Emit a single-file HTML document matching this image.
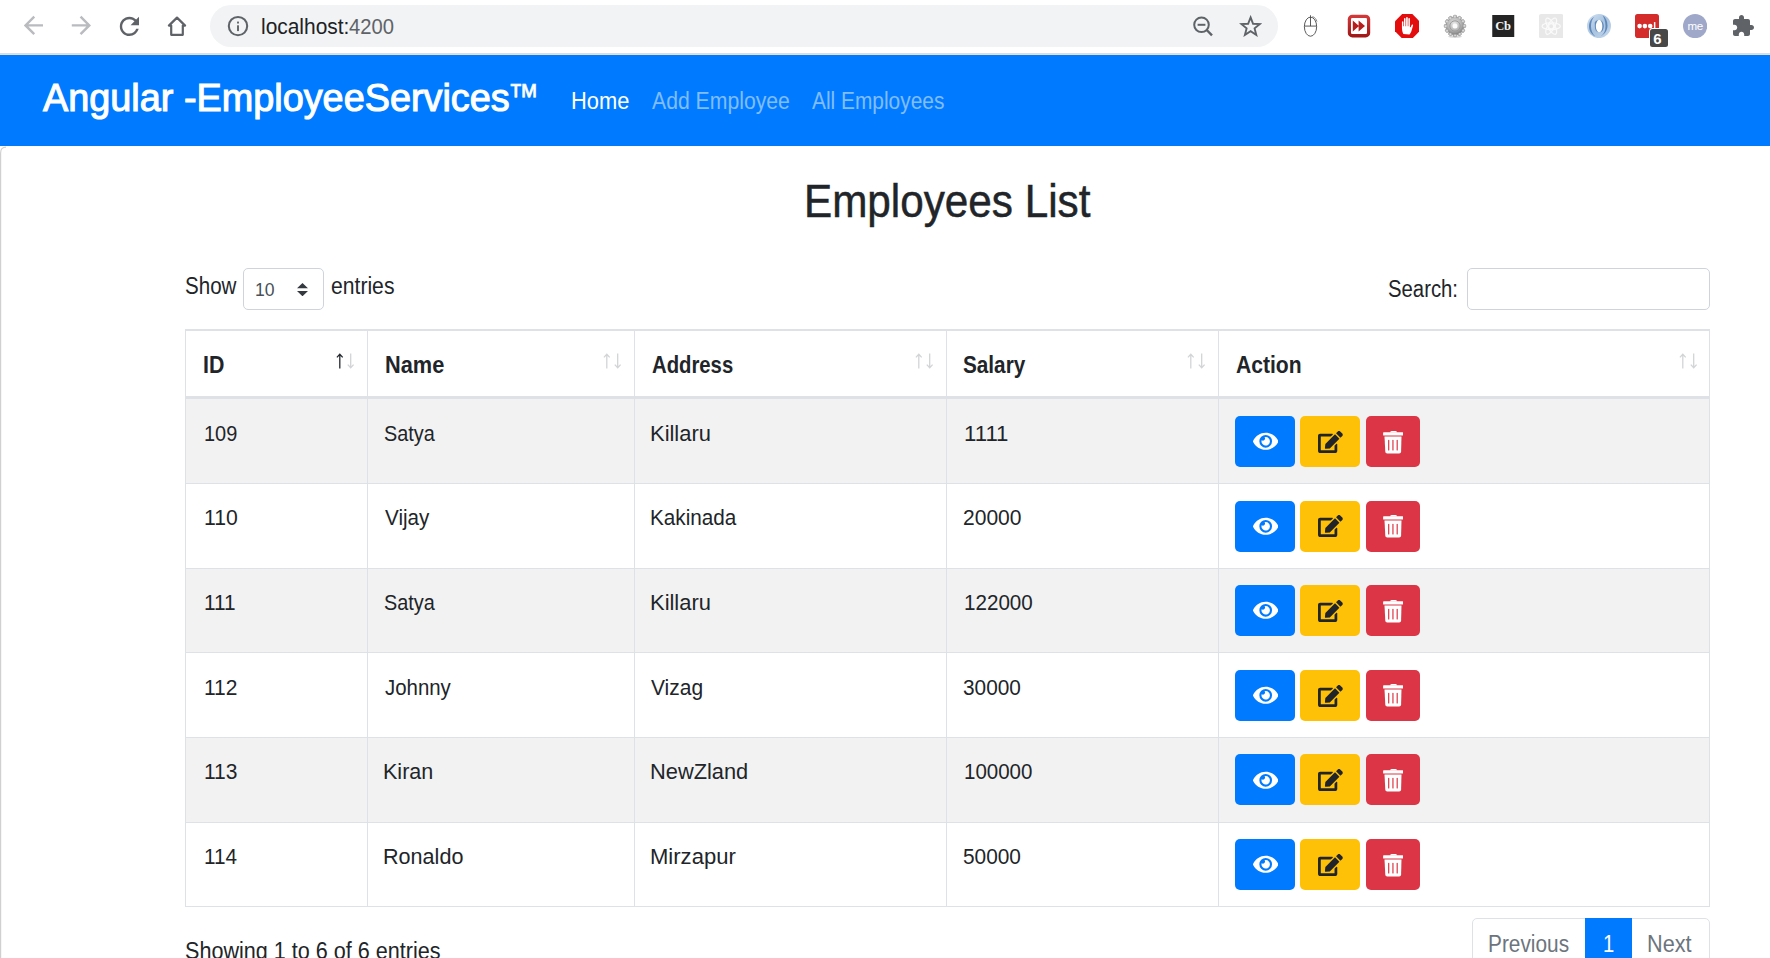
<!DOCTYPE html>
<html><head><meta charset="utf-8"><title>Employees</title><style>
html,body{margin:0;padding:0;width:1770px;height:958px;overflow:hidden;background:#fff}
body{position:relative;font-family:"Liberation Sans",sans-serif}
.r{position:absolute;display:block}
.t{position:absolute;white-space:nowrap;line-height:1;transform-origin:0 0}
</style></head><body>
<div class="r" style="left:0px;top:0px;width:1770px;height:53px;background:#ffffff;"></div>
<div class="r" style="left:0px;top:53px;width:1770px;height:1px;background:#dadce0;"></div>
<div class="r" style="left:0px;top:54px;width:1770px;height:1px;background:#e4e0dc;"></div>
<div class="r" style="left:210px;top:5px;width:1068px;height:42px;background:#f1f3f4;border-radius:21px;"></div>
<svg class="r" style="left:18.6px;top:11px;width:28.8px;height:28.8px" viewBox="0 0 24 24"><path fill="#b9bbbe" d="M20 11H7.83l5.59-5.59L12 4l-8 8 8 8 1.41-1.41L7.83 13H20v-2z"/></svg>
<svg class="r" style="left:66.6px;top:11px;width:28.8px;height:28.8px" viewBox="0 0 24 24"><path fill="#b9bbbe" d="M12 4l-1.41 1.41L16.17 11H4v2h12.17l-5.58 5.59L12 20l8-8z"/></svg>
<svg class="r" style="left:115.3px;top:11.6px;width:28.8px;height:28.8px" viewBox="0 0 24 24"><path fill="#5f6368" d="M17.65 6.35C16.2 4.9 14.21 4 12 4c-4.42 0-7.99 3.58-7.99 8s3.57 8 7.99 8c3.730 0 6.84-2.55 7.73-6h-2.080c-.82 2.33-3.04 4-5.65 4-3.31 0-6-2.69-6-6s2.69-6 6-6c1.66 0 3.14.69 4.22 1.78L13 11h7V4l-2.35 2.35z"/></svg>
<svg class="r" style="left:165px;top:14px;width:24px;height:24px" viewBox="0 0 24 24"><path fill="none" stroke="#5f6368" stroke-width="2.2" stroke-linejoin="round" d="M12 3.6L3.9 11.6H6.2V20.8h11.6v-9.2h2.3z"/></svg>
<svg class="r" style="left:225.5px;top:14.4px;width:24px;height:24px" viewBox="0 0 24 24"><circle cx="12" cy="12.1" r="9.2" fill="none" stroke="#5f6368" stroke-width="2.05"/><rect x="11.05" y="11.3" width="1.9" height="5.8" fill="#5f6368"/><rect x="11.05" y="7.6" width="1.9" height="1.9" fill="#5f6368"/></svg>
<svg class="r" style="left:1190px;top:12.5px;width:24px;height:26px" viewBox="0 0 24 26"><circle cx="11.5" cy="11.8" r="7.3" fill="none" stroke="#5f6368" stroke-width="2"/><rect x="7.6" y="10.8" width="7.8" height="2" fill="#5f6368"/><path d="M16.7 17l5.3 5.3" stroke="#5f6368" stroke-width="2.4"/></svg>
<svg class="r" style="left:1239.3px;top:14.6px;width:23.2px;height:22.8px" viewBox="0 0 24 24"><path fill="none" stroke="#5f6368" stroke-width="2" stroke-linejoin="miter" d="M12 2.6l2.6 6.6 7 .4-5.4 4.5 1.8 6.9L12 17.1 6 21l1.8-6.9L2.4 9.6l7-.4z"/></svg>
<svg class="r" style="left:1300px;top:14.3px;width:22px;height:23.4px" viewBox="0 0 22 24"><ellipse cx="10.5" cy="13" rx="6.3" ry="9.8" fill="none" stroke="#444" stroke-width="0.9"/><path d="M4.3 12.4h12.4M10.5 1.3v11.1" stroke="#444" stroke-width="0.9" fill="none"/><path d="M12.5 2.6c2.5 .8 4 2.8 4.6 5.2" stroke="#666" stroke-width="0.8" fill="none"/></svg>
<svg class="r" style="left:1347px;top:14px;width:24px;height:24px" viewBox="0 0 24 24"><defs><linearGradient id="rf" x1="0" y1="0" x2="0" y2="1"><stop offset="0" stop-color="#d63a3a"/><stop offset="1" stop-color="#9e1616"/></linearGradient></defs><rect x="0.8" y="0.8" width="22.4" height="22.6" rx="4.5" fill="url(#rf)"/><rect x="4" y="4" width="16" height="16" rx="1.2" fill="#fff"/><path d="M5.8 6.6l6.2 5.4-6.2 5.4zM11.6 6.6l6.4 5.4-6.4 5.4z" fill="#b81d1d"/></svg>
<svg class="r" style="left:1394.5px;top:13.5px;width:24.5px;height:24.5px" viewBox="0 0 24 24"><path d="M7 0h10l7 7v10l-7 7H7l-7-7V7z" fill="#e40d0d"/><path d="M8.2 19.5c-1-1.8-1.4-4-1.4-6V7.6c0-.7 1.4-.7 1.4 0V12h.6V4.6c0-.8 1.5-.8 1.5 0V12h.6V3.6c0-.9 1.6-.9 1.6 0V12h.6V4.4c0-.8 1.5-.8 1.5 0V13l.7.1 1-2.3c.4-.8 1.6-.5 1.4.4l-1.6 5.5c-.5 1.6-1.3 2.8-2 3.4z" fill="#fff"/></svg>
<svg class="r" style="left:1443px;top:13.5px;width:24px;height:24px" viewBox="0 0 24 24"><defs><radialGradient id="gg" cx="45%" cy="35%" r="70%"><stop offset="0" stop-color="#e6e6e6"/><stop offset=".6" stop-color="#b4b4b4"/><stop offset="1" stop-color="#7a7a7a"/></radialGradient></defs><ellipse cx="12" cy="22.6" rx="7" ry="1.2" fill="#d8d8d8"/><g fill="url(#gg)" stroke="#8a8a8a" stroke-width="0.5"><circle cx="12" cy="12" r="8.8"/><rect x="10.2" y="1.2" width="3.6" height="4.4" rx="1.4" transform="rotate(0 12 12)"/><rect x="10.2" y="1.2" width="3.6" height="4.4" rx="1.4" transform="rotate(30 12 12)"/><rect x="10.2" y="1.2" width="3.6" height="4.4" rx="1.4" transform="rotate(60 12 12)"/><rect x="10.2" y="1.2" width="3.6" height="4.4" rx="1.4" transform="rotate(90 12 12)"/><rect x="10.2" y="1.2" width="3.6" height="4.4" rx="1.4" transform="rotate(120 12 12)"/><rect x="10.2" y="1.2" width="3.6" height="4.4" rx="1.4" transform="rotate(150 12 12)"/><rect x="10.2" y="1.2" width="3.6" height="4.4" rx="1.4" transform="rotate(180 12 12)"/><rect x="10.2" y="1.2" width="3.6" height="4.4" rx="1.4" transform="rotate(210 12 12)"/><rect x="10.2" y="1.2" width="3.6" height="4.4" rx="1.4" transform="rotate(240 12 12)"/><rect x="10.2" y="1.2" width="3.6" height="4.4" rx="1.4" transform="rotate(270 12 12)"/><rect x="10.2" y="1.2" width="3.6" height="4.4" rx="1.4" transform="rotate(300 12 12)"/><rect x="10.2" y="1.2" width="3.6" height="4.4" rx="1.4" transform="rotate(330 12 12)"/></g><circle cx="12" cy="12" r="8.4" fill="url(#gg)"/><circle cx="12" cy="12" r="5.2" fill="none" stroke="#9c9c9c" stroke-width="1"/><circle cx="12" cy="12" r="2.5" fill="#fbfbfb"/></svg>
<svg class="r" style="left:1492px;top:15px;width:22.5px;height:22px" viewBox="0 0 22 22"><rect x="0" y="0" width="22" height="22" fill="#242424"/><text x="10.8" y="15.2" text-anchor="middle" font-family="Liberation Serif" font-weight="700" font-size="12.5" fill="#f2f2f2" letter-spacing="-0.3">Cb</text></svg>
<svg class="r" style="left:1538.8px;top:13.8px;width:24.4px;height:24.4px" viewBox="0 0 24 24"><rect width="24" height="24" rx="2" fill="#e8e8e8"/><g fill="none" stroke="#fafafa" stroke-width="1.2"><circle cx="12" cy="12" r="2.5"/><ellipse cx="12" cy="12" rx="9" ry="3.4"/><ellipse cx="12" cy="12" rx="9" ry="3.4" transform="rotate(60 12 12)"/><ellipse cx="12" cy="12" rx="9" ry="3.4" transform="rotate(120 12 12)"/></g></svg>
<svg class="r" style="left:1587px;top:13.8px;width:24px;height:24.2px" viewBox="0 0 24 24"><defs><linearGradient id="bo" x1="0" y1="0" x2="1" y2="1"><stop offset="0" stop-color="#d2e2f2"/><stop offset=".5" stop-color="#a9c3df"/><stop offset="1" stop-color="#c6daee"/></linearGradient></defs><path fill="url(#bo)" fill-rule="evenodd" d="M12 0a12 12 0 1 1 0 24a12 12 0 1 1 0-24zM12.2 6c-1.9 0-3.4 2.7-3.4 6s1.5 6 3.4 6 3.4-2.7 3.4-6-1.5-6-3.4-6z"/><path fill="#4f7db5" opacity=".85" d="M15.6 1.2c3 2 4.9 5.8 4.9 10.4 0 4.6-2.8 8.4-6.6 10.4 3.2-2.2 4.6-5.6 4.6-10.2S16.9 3.3 15.6 1.2zM8.4 22.4C4.6 20.6 2 16.6 2 12.2S4.2 4.2 7.4 2.6C5.2 4.8 4 8 4 12.2s1.6 8 4.4 10.2zM7.8 8.2c.9-1.6 2.4-2.3 3.6-2.1-1.4.8-2.6 3.1-2.6 5.9 0 2.8.8 5 2.2 6.1-1.8-.3-3.2-2.8-3.2-6.1 0-1.4 0-2.7 0-3.8zM16.8 12c0 3.2-1.4 5.8-3.4 6.3 1.3-1.3 2-3.5 2-6.3s-.9-5.2-2.3-6.2c2 .5 3.7 3 3.7 6.2z"/></svg>
<svg class="r" style="left:1635px;top:13.8px;width:24px;height:24.2px" viewBox="0 0 24 24"><rect width="24" height="24" rx="2.5" fill="#d42b2b"/><circle cx="4.6" cy="12" r="2.3" fill="#fff"/><circle cx="9.9" cy="12" r="2.3" fill="#fff"/><circle cx="15.2" cy="12" r="2.3" fill="#fff"/><rect x="18.9" y="8" width="1.5" height="6" fill="#fff"/></svg>
<div class="r" style="left:1650px;top:29.1px;width:18px;height:17.7px;background:#484848;border-radius:2.5px;box-shadow:0 0 0 1px #fff;"></div>
<div class="t" style="left:1653.2px;top:29.6px;font-size:15px;font-weight:700;color:#fff;line-height:17px">6</div>
<svg class="r" style="left:1683px;top:13.8px;width:24.2px;height:24.2px" viewBox="0 0 24 24"><circle cx="12" cy="12" r="12" fill="#9fa8c9"/><text x="12" y="15.4" text-anchor="middle" font-family="Liberation Sans" font-size="11.5" fill="#fff" letter-spacing="-0.4">me</text></svg>
<svg class="r" style="left:1729.8px;top:13.5px;width:26px;height:24px" viewBox="0 0 24 24"><path fill="#5f6368" d="M20.5 11H19V7c0-1.1-.9-2-2-2h-4V3.5C13 2.12 11.88 1 10.5 1S8 2.12 8 3.5V5H4c-1.1 0-1.99.9-1.99 2v3.8H3.5c1.49 0 2.7 1.21 2.7 2.7s-1.21 2.7-2.7 2.7H2V20c0 1.1.9 2 2 2h3.8v-1.5c0-1.49 1.21-2.7 2.7-2.7 1.49 0 2.7 1.21 2.7 2.7V22H17c1.1 0 2-.9 2-2v-4h1.5c1.38 0 2.5-1.12 2.5-2.5S21.88 11 20.5 11z"/></svg>
<div class="r" style="left:0px;top:55px;width:1770px;height:91px;background:#007bff;"></div>
<svg class="r" style="left:0px;top:146px;width:12px;height:812px" viewBox="0 0 12 812"><path d="M0.6 812V7Q0.6 1.2 6 1.2" fill="none" stroke="#d0d0d0" stroke-width="1.2"/></svg>
<div class="r" style="left:185px;top:329px;width:1525px;height:2px;background:#dee2e6;"></div>
<div class="r" style="left:185px;top:399px;width:1525px;height:84px;background:#f2f2f2;"></div>
<div class="r" style="left:185px;top:568px;width:1525px;height:84px;background:#f2f2f2;"></div>
<div class="r" style="left:185px;top:737px;width:1525px;height:85px;background:#f2f2f2;"></div>
<div class="r" style="left:185px;top:396px;width:1525px;height:3px;background:#dee2e6;"></div>
<div class="r" style="left:185px;top:483px;width:1525px;height:1px;background:#dee2e6;"></div>
<div class="r" style="left:185px;top:568px;width:1525px;height:1px;background:#dee2e6;"></div>
<div class="r" style="left:185px;top:652px;width:1525px;height:1px;background:#dee2e6;"></div>
<div class="r" style="left:185px;top:737px;width:1525px;height:1px;background:#dee2e6;"></div>
<div class="r" style="left:185px;top:822px;width:1525px;height:1px;background:#dee2e6;"></div>
<div class="r" style="left:185px;top:906px;width:1525px;height:1px;background:#dee2e6;"></div>
<div class="r" style="left:185px;top:329px;width:1px;height:578px;background:#dee2e6;"></div>
<div class="r" style="left:367px;top:329px;width:1px;height:578px;background:#dee2e6;"></div>
<div class="r" style="left:634px;top:329px;width:1px;height:578px;background:#dee2e6;"></div>
<div class="r" style="left:946px;top:329px;width:1px;height:578px;background:#dee2e6;"></div>
<div class="r" style="left:1218px;top:329px;width:1px;height:578px;background:#dee2e6;"></div>
<div class="r" style="left:1709px;top:329px;width:1px;height:578px;background:#dee2e6;"></div>
<svg class="r" style="left:335.2px;top:353.0px;width:20px;height:16px" viewBox="0 0 20 16"><path d="M4.8 15.6V1.6M1.9 4.4L4.8 1.3l2.9 3.1" fill="none" stroke="#24292e" stroke-width="1.3"/><path d="M15.7 0.6v14M12.8 11.6l2.9 3.1 2.9-3.1" fill="none" stroke="#d2d4d6" stroke-width="1.3"/></svg>
<svg class="r" style="left:602.1px;top:353.0px;width:20px;height:16px" viewBox="0 0 20 16"><path d="M4.8 15.6V1.6M1.9 4.4L4.8 1.3l2.9 3.1" fill="none" stroke="#d2d4d6" stroke-width="1.3"/><path d="M15.7 0.6v14M12.8 11.6l2.9 3.1 2.9-3.1" fill="none" stroke="#d2d4d6" stroke-width="1.3"/></svg>
<svg class="r" style="left:914.0px;top:353.0px;width:20px;height:16px" viewBox="0 0 20 16"><path d="M4.8 15.6V1.6M1.9 4.4L4.8 1.3l2.9 3.1" fill="none" stroke="#d2d4d6" stroke-width="1.3"/><path d="M15.7 0.6v14M12.8 11.6l2.9 3.1 2.9-3.1" fill="none" stroke="#d2d4d6" stroke-width="1.3"/></svg>
<svg class="r" style="left:1186.1px;top:353.0px;width:20px;height:16px" viewBox="0 0 20 16"><path d="M4.8 15.6V1.6M1.9 4.4L4.8 1.3l2.9 3.1" fill="none" stroke="#d2d4d6" stroke-width="1.3"/><path d="M15.7 0.6v14M12.8 11.6l2.9 3.1 2.9-3.1" fill="none" stroke="#d2d4d6" stroke-width="1.3"/></svg>
<svg class="r" style="left:1677.5px;top:353.0px;width:20px;height:16px" viewBox="0 0 20 16"><path d="M4.8 15.6V1.6M1.9 4.4L4.8 1.3l2.9 3.1" fill="none" stroke="#d2d4d6" stroke-width="1.3"/><path d="M15.7 0.6v14M12.8 11.6l2.9 3.1 2.9-3.1" fill="none" stroke="#d2d4d6" stroke-width="1.3"/></svg>
<div class="r" style="left:1235px;top:416px;width:60px;height:51px;background:#007bff;border-radius:5px;"></div>
<div class="r" style="left:1300px;top:416px;width:60px;height:51px;background:#ffc107;border-radius:5px;"></div>
<div class="r" style="left:1366px;top:416px;width:54px;height:51px;background:#dc3545;border-radius:5px;"></div>
<svg class="r" style="left:1252.7px;top:430.0px;width:25.4px;height:22.6px" viewBox="0 0 576 512"><path fill="#fff" d="M572.52 241.4C518.29 135.59 410.93 64 288 64S57.68 135.64 3.48 241.41a32.350 32.350 0 0 0 0 29.19C57.71 376.41 165.07 448 288 448s230.32-71.64 284.52-177.41a32.350 32.350 0 0 0 0-29.19zM288 400a144 144 0 1 1 144-144 143.93 143.93 0 0 1-144 144zm0-240a95.31 95.31 0 0 0-25.31 3.79 47.85 47.85 0 0 1-66.9 66.9A95.78 95.78 0 1 0 288 160z"/></svg>
<svg class="r" style="left:1318.2px;top:430.79999999999995px;width:24.8px;height:22.0px" viewBox="0 0 576 512"><path fill="#212529" d="M402.6 83.2l90.2 90.2c3.8 3.8 3.8 10 0 13.8L274.4 405.6l-92.8 10.3c-12.4 1.4-22.9-9.1-21.5-21.5l10.3-92.8L388.8 83.2c3.8-3.8 10-3.8 13.8 0zm162-22.9l-48.8-48.8c-15.2-15.2-39.9-15.2-55.2 0l-35.4 35.4c-3.8 3.8-3.8 10 0 13.8l90.2 90.2c3.8 3.8 10 3.8 13.8 0l35.4-35.4c15.2-15.3 15.2-40 0-55.2zM384 346.2V448H64V128h229.8c3.2 0 6.2-1.3 8.5-3.5l40-40c7.6-7.6 2.2-20.5-8.5-20.5H48C21.5 64 0 85.5 0 112v352c0 26.5 21.5 48 48 48h352c26.5 0 48-21.5 48-48V306.2c0-10.7-12.9-16-20.5-8.5l-40 40c-2.2 2.3-3.5 5.3-3.5 8.5z"/></svg>
<svg class="r" style="left:1382.8px;top:430.5px;width:20.4px;height:23px" viewBox="0 0 20.4 23"><path fill="#fff" d="M6.9 1.5Q7.2 0 8.6 0H12.6Q14 0 14.2 1.5z"/><rect x="0.1" y="1.3" width="20.1" height="3.1" rx="0.5" fill="#fff"/><path fill="#fff" d="M1.5 5.5H18.5L18.1 20.7Q18 22.5 16.2 22.5H4.2Q2.4 22.5 2.3 20.7z"/><g fill="#dc3545"><rect x="5.1" y="8.8" width="1.2" height="10.7" rx="0.6"/><rect x="9.35" y="8.8" width="1.2" height="10.7" rx="0.6"/><rect x="13.6" y="8.8" width="1.2" height="10.7" rx="0.6"/></g></svg>
<div class="r" style="left:1235px;top:501px;width:60px;height:51px;background:#007bff;border-radius:5px;"></div>
<div class="r" style="left:1300px;top:501px;width:60px;height:51px;background:#ffc107;border-radius:5px;"></div>
<div class="r" style="left:1366px;top:501px;width:54px;height:51px;background:#dc3545;border-radius:5px;"></div>
<svg class="r" style="left:1252.7px;top:514.65px;width:25.4px;height:22.6px" viewBox="0 0 576 512"><path fill="#fff" d="M572.52 241.4C518.29 135.59 410.93 64 288 64S57.68 135.64 3.48 241.41a32.350 32.350 0 0 0 0 29.19C57.71 376.41 165.07 448 288 448s230.32-71.64 284.52-177.41a32.350 32.350 0 0 0 0-29.19zM288 400a144 144 0 1 1 144-144 143.93 143.93 0 0 1-144 144zm0-240a95.31 95.31 0 0 0-25.31 3.79 47.85 47.85 0 0 1-66.9 66.9A95.78 95.78 0 1 0 288 160z"/></svg>
<svg class="r" style="left:1318.2px;top:515.4499999999999px;width:24.8px;height:22.0px" viewBox="0 0 576 512"><path fill="#212529" d="M402.6 83.2l90.2 90.2c3.8 3.8 3.8 10 0 13.8L274.4 405.6l-92.8 10.3c-12.4 1.4-22.9-9.1-21.5-21.5l10.3-92.8L388.8 83.2c3.8-3.8 10-3.8 13.8 0zm162-22.9l-48.8-48.8c-15.2-15.2-39.9-15.2-55.2 0l-35.4 35.4c-3.8 3.8-3.8 10 0 13.8l90.2 90.2c3.8 3.8 10 3.8 13.8 0l35.4-35.4c15.2-15.3 15.2-40 0-55.2zM384 346.2V448H64V128h229.8c3.2 0 6.2-1.3 8.5-3.5l40-40c7.6-7.6 2.2-20.5-8.5-20.5H48C21.5 64 0 85.5 0 112v352c0 26.5 21.5 48 48 48h352c26.5 0 48-21.5 48-48V306.2c0-10.7-12.9-16-20.5-8.5l-40 40c-2.2 2.3-3.5 5.3-3.5 8.5z"/></svg>
<svg class="r" style="left:1382.8px;top:515.15px;width:20.4px;height:23px" viewBox="0 0 20.4 23"><path fill="#fff" d="M6.9 1.5Q7.2 0 8.6 0H12.6Q14 0 14.2 1.5z"/><rect x="0.1" y="1.3" width="20.1" height="3.1" rx="0.5" fill="#fff"/><path fill="#fff" d="M1.5 5.5H18.5L18.1 20.7Q18 22.5 16.2 22.5H4.2Q2.4 22.5 2.3 20.7z"/><g fill="#dc3545"><rect x="5.1" y="8.8" width="1.2" height="10.7" rx="0.6"/><rect x="9.35" y="8.8" width="1.2" height="10.7" rx="0.6"/><rect x="13.6" y="8.8" width="1.2" height="10.7" rx="0.6"/></g></svg>
<div class="r" style="left:1235px;top:585px;width:60px;height:51px;background:#007bff;border-radius:5px;"></div>
<div class="r" style="left:1300px;top:585px;width:60px;height:51px;background:#ffc107;border-radius:5px;"></div>
<div class="r" style="left:1366px;top:585px;width:54px;height:51px;background:#dc3545;border-radius:5px;"></div>
<svg class="r" style="left:1252.7px;top:599.3000000000001px;width:25.4px;height:22.6px" viewBox="0 0 576 512"><path fill="#fff" d="M572.52 241.4C518.29 135.59 410.93 64 288 64S57.68 135.64 3.48 241.41a32.350 32.350 0 0 0 0 29.19C57.71 376.41 165.07 448 288 448s230.32-71.64 284.52-177.41a32.350 32.350 0 0 0 0-29.19zM288 400a144 144 0 1 1 144-144 143.93 143.93 0 0 1-144 144zm0-240a95.31 95.31 0 0 0-25.31 3.79 47.85 47.85 0 0 1-66.9 66.9A95.78 95.78 0 1 0 288 160z"/></svg>
<svg class="r" style="left:1318.2px;top:600.1px;width:24.8px;height:22.0px" viewBox="0 0 576 512"><path fill="#212529" d="M402.6 83.2l90.2 90.2c3.8 3.8 3.8 10 0 13.8L274.4 405.6l-92.8 10.3c-12.4 1.4-22.9-9.1-21.5-21.5l10.3-92.8L388.8 83.2c3.8-3.8 10-3.8 13.8 0zm162-22.9l-48.8-48.8c-15.2-15.2-39.9-15.2-55.2 0l-35.4 35.4c-3.8 3.8-3.8 10 0 13.8l90.2 90.2c3.8 3.8 10 3.8 13.8 0l35.4-35.4c15.2-15.3 15.2-40 0-55.2zM384 346.2V448H64V128h229.8c3.2 0 6.2-1.3 8.5-3.5l40-40c7.6-7.6 2.2-20.5-8.5-20.5H48C21.5 64 0 85.5 0 112v352c0 26.5 21.5 48 48 48h352c26.5 0 48-21.5 48-48V306.2c0-10.7-12.9-16-20.5-8.5l-40 40c-2.2 2.3-3.5 5.3-3.5 8.5z"/></svg>
<svg class="r" style="left:1382.8px;top:599.8000000000001px;width:20.4px;height:23px" viewBox="0 0 20.4 23"><path fill="#fff" d="M6.9 1.5Q7.2 0 8.6 0H12.6Q14 0 14.2 1.5z"/><rect x="0.1" y="1.3" width="20.1" height="3.1" rx="0.5" fill="#fff"/><path fill="#fff" d="M1.5 5.5H18.5L18.1 20.7Q18 22.5 16.2 22.5H4.2Q2.4 22.5 2.3 20.7z"/><g fill="#dc3545"><rect x="5.1" y="8.8" width="1.2" height="10.7" rx="0.6"/><rect x="9.35" y="8.8" width="1.2" height="10.7" rx="0.6"/><rect x="13.6" y="8.8" width="1.2" height="10.7" rx="0.6"/></g></svg>
<div class="r" style="left:1235px;top:670px;width:60px;height:51px;background:#007bff;border-radius:5px;"></div>
<div class="r" style="left:1300px;top:670px;width:60px;height:51px;background:#ffc107;border-radius:5px;"></div>
<div class="r" style="left:1366px;top:670px;width:54px;height:51px;background:#dc3545;border-radius:5px;"></div>
<svg class="r" style="left:1252.7px;top:683.95px;width:25.4px;height:22.6px" viewBox="0 0 576 512"><path fill="#fff" d="M572.52 241.4C518.29 135.59 410.93 64 288 64S57.68 135.64 3.48 241.41a32.350 32.350 0 0 0 0 29.19C57.71 376.41 165.07 448 288 448s230.32-71.64 284.52-177.41a32.350 32.350 0 0 0 0-29.19zM288 400a144 144 0 1 1 144-144 143.93 143.93 0 0 1-144 144zm0-240a95.31 95.31 0 0 0-25.31 3.79 47.85 47.85 0 0 1-66.9 66.9A95.78 95.78 0 1 0 288 160z"/></svg>
<svg class="r" style="left:1318.2px;top:684.75px;width:24.8px;height:22.0px" viewBox="0 0 576 512"><path fill="#212529" d="M402.6 83.2l90.2 90.2c3.8 3.8 3.8 10 0 13.8L274.4 405.6l-92.8 10.3c-12.4 1.4-22.9-9.1-21.5-21.5l10.3-92.8L388.8 83.2c3.8-3.8 10-3.8 13.8 0zm162-22.9l-48.8-48.8c-15.2-15.2-39.9-15.2-55.2 0l-35.4 35.4c-3.8 3.8-3.8 10 0 13.8l90.2 90.2c3.8 3.8 10 3.8 13.8 0l35.4-35.4c15.2-15.3 15.2-40 0-55.2zM384 346.2V448H64V128h229.8c3.2 0 6.2-1.3 8.5-3.5l40-40c7.6-7.6 2.2-20.5-8.5-20.5H48C21.5 64 0 85.5 0 112v352c0 26.5 21.5 48 48 48h352c26.5 0 48-21.5 48-48V306.2c0-10.7-12.9-16-20.5-8.5l-40 40c-2.2 2.3-3.5 5.3-3.5 8.5z"/></svg>
<svg class="r" style="left:1382.8px;top:684.45px;width:20.4px;height:23px" viewBox="0 0 20.4 23"><path fill="#fff" d="M6.9 1.5Q7.2 0 8.6 0H12.6Q14 0 14.2 1.5z"/><rect x="0.1" y="1.3" width="20.1" height="3.1" rx="0.5" fill="#fff"/><path fill="#fff" d="M1.5 5.5H18.5L18.1 20.7Q18 22.5 16.2 22.5H4.2Q2.4 22.5 2.3 20.7z"/><g fill="#dc3545"><rect x="5.1" y="8.8" width="1.2" height="10.7" rx="0.6"/><rect x="9.35" y="8.8" width="1.2" height="10.7" rx="0.6"/><rect x="13.6" y="8.8" width="1.2" height="10.7" rx="0.6"/></g></svg>
<div class="r" style="left:1235px;top:754px;width:60px;height:51px;background:#007bff;border-radius:5px;"></div>
<div class="r" style="left:1300px;top:754px;width:60px;height:51px;background:#ffc107;border-radius:5px;"></div>
<div class="r" style="left:1366px;top:754px;width:54px;height:51px;background:#dc3545;border-radius:5px;"></div>
<svg class="r" style="left:1252.7px;top:768.6px;width:25.4px;height:22.6px" viewBox="0 0 576 512"><path fill="#fff" d="M572.52 241.4C518.29 135.59 410.93 64 288 64S57.68 135.64 3.48 241.41a32.350 32.350 0 0 0 0 29.19C57.71 376.41 165.07 448 288 448s230.32-71.64 284.52-177.41a32.350 32.350 0 0 0 0-29.19zM288 400a144 144 0 1 1 144-144 143.93 143.93 0 0 1-144 144zm0-240a95.31 95.31 0 0 0-25.31 3.79 47.85 47.85 0 0 1-66.9 66.9A95.78 95.78 0 1 0 288 160z"/></svg>
<svg class="r" style="left:1318.2px;top:769.4px;width:24.8px;height:22.0px" viewBox="0 0 576 512"><path fill="#212529" d="M402.6 83.2l90.2 90.2c3.8 3.8 3.8 10 0 13.8L274.4 405.6l-92.8 10.3c-12.4 1.4-22.9-9.1-21.5-21.5l10.3-92.8L388.8 83.2c3.8-3.8 10-3.8 13.8 0zm162-22.9l-48.8-48.8c-15.2-15.2-39.9-15.2-55.2 0l-35.4 35.4c-3.8 3.8-3.8 10 0 13.8l90.2 90.2c3.8 3.8 10 3.8 13.8 0l35.4-35.4c15.2-15.3 15.2-40 0-55.2zM384 346.2V448H64V128h229.8c3.2 0 6.2-1.3 8.5-3.5l40-40c7.6-7.6 2.2-20.5-8.5-20.5H48C21.5 64 0 85.5 0 112v352c0 26.5 21.5 48 48 48h352c26.5 0 48-21.5 48-48V306.2c0-10.7-12.9-16-20.5-8.5l-40 40c-2.2 2.3-3.5 5.3-3.5 8.5z"/></svg>
<svg class="r" style="left:1382.8px;top:769.1px;width:20.4px;height:23px" viewBox="0 0 20.4 23"><path fill="#fff" d="M6.9 1.5Q7.2 0 8.6 0H12.6Q14 0 14.2 1.5z"/><rect x="0.1" y="1.3" width="20.1" height="3.1" rx="0.5" fill="#fff"/><path fill="#fff" d="M1.5 5.5H18.5L18.1 20.7Q18 22.5 16.2 22.5H4.2Q2.4 22.5 2.3 20.7z"/><g fill="#dc3545"><rect x="5.1" y="8.8" width="1.2" height="10.7" rx="0.6"/><rect x="9.35" y="8.8" width="1.2" height="10.7" rx="0.6"/><rect x="13.6" y="8.8" width="1.2" height="10.7" rx="0.6"/></g></svg>
<div class="r" style="left:1235px;top:839px;width:60px;height:51px;background:#007bff;border-radius:5px;"></div>
<div class="r" style="left:1300px;top:839px;width:60px;height:51px;background:#ffc107;border-radius:5px;"></div>
<div class="r" style="left:1366px;top:839px;width:54px;height:51px;background:#dc3545;border-radius:5px;"></div>
<svg class="r" style="left:1252.7px;top:853.25px;width:25.4px;height:22.6px" viewBox="0 0 576 512"><path fill="#fff" d="M572.52 241.4C518.29 135.59 410.93 64 288 64S57.68 135.64 3.48 241.41a32.350 32.350 0 0 0 0 29.19C57.71 376.41 165.07 448 288 448s230.32-71.64 284.52-177.41a32.350 32.350 0 0 0 0-29.19zM288 400a144 144 0 1 1 144-144 143.93 143.93 0 0 1-144 144zm0-240a95.31 95.31 0 0 0-25.31 3.79 47.85 47.85 0 0 1-66.9 66.9A95.78 95.78 0 1 0 288 160z"/></svg>
<svg class="r" style="left:1318.2px;top:854.05px;width:24.8px;height:22.0px" viewBox="0 0 576 512"><path fill="#212529" d="M402.6 83.2l90.2 90.2c3.8 3.8 3.8 10 0 13.8L274.4 405.6l-92.8 10.3c-12.4 1.4-22.9-9.1-21.5-21.5l10.3-92.8L388.8 83.2c3.8-3.8 10-3.8 13.8 0zm162-22.9l-48.8-48.8c-15.2-15.2-39.9-15.2-55.2 0l-35.4 35.4c-3.8 3.8-3.8 10 0 13.8l90.2 90.2c3.8 3.8 10 3.8 13.8 0l35.4-35.4c15.2-15.3 15.2-40 0-55.2zM384 346.2V448H64V128h229.8c3.2 0 6.2-1.3 8.5-3.5l40-40c7.6-7.6 2.2-20.5-8.5-20.5H48C21.5 64 0 85.5 0 112v352c0 26.5 21.5 48 48 48h352c26.5 0 48-21.5 48-48V306.2c0-10.7-12.9-16-20.5-8.5l-40 40c-2.2 2.3-3.5 5.3-3.5 8.5z"/></svg>
<svg class="r" style="left:1382.8px;top:853.75px;width:20.4px;height:23px" viewBox="0 0 20.4 23"><path fill="#fff" d="M6.9 1.5Q7.2 0 8.6 0H12.6Q14 0 14.2 1.5z"/><rect x="0.1" y="1.3" width="20.1" height="3.1" rx="0.5" fill="#fff"/><path fill="#fff" d="M1.5 5.5H18.5L18.1 20.7Q18 22.5 16.2 22.5H4.2Q2.4 22.5 2.3 20.7z"/><g fill="#dc3545"><rect x="5.1" y="8.8" width="1.2" height="10.7" rx="0.6"/><rect x="9.35" y="8.8" width="1.2" height="10.7" rx="0.6"/><rect x="13.6" y="8.8" width="1.2" height="10.7" rx="0.6"/></g></svg>
<div class="r" style="left:243.4px;top:268.1px;width:81px;height:41.6px;background:#fff;border:1px solid #ced4da;box-sizing:border-box;border-radius:5px;"></div>
<svg class="r" style="left:296.8px;top:283px;width:11px;height:13.3px" viewBox="0 0 11 13.3"><path d="M5.5 0L11 5.3H0zM0 8L11 8 5.5 13.3z" fill="#343a40"/></svg>
<div class="r" style="left:1466.5px;top:268px;width:243.3px;height:41.7px;background:#fff;border:1px solid #ced4da;box-sizing:border-box;border-radius:5px;"></div>
<div class="r" style="left:1471.5px;top:918.3px;width:238px;height:60px;background:#fff;border:1px solid #dee2e6;box-sizing:border-box;border-radius:5px;"></div>
<div class="r" style="left:1585px;top:917.8px;width:47px;height:60px;background:#007bff;"></div>
<div class="t" style="left:261.23px;top:16.70px;font-size:21.5px;font-weight:400;color:#202124;transform:scaleX(0.9727);">localhost:</div>
<div class="t" style="left:349.00px;top:16.70px;font-size:21.5px;font-weight:400;color:#5f6368;transform:scaleX(0.9383);">4200</div>
<div class="t" style="left:42.87px;top:78.50px;font-size:38.8px;font-weight:400;color:#ffffff;transform:scaleX(0.9749);-webkit-text-stroke:1.1px currentColor;">Angular -EmployeeServices</div>
<div class="t" style="left:508.48px;top:78.80px;font-size:34.4px;font-weight:400;color:#ffffff;transform:scaleX(0.9071);-webkit-text-stroke:0.6px currentColor;">&trade;</div>
<div class="t" style="left:570.90px;top:90.00px;font-size:23px;font-weight:400;color:#ffffff;transform:scaleX(0.9508);">Home</div>
<div class="t" style="left:651.70px;top:90.00px;font-size:23px;font-weight:400;color:#80bdff;transform:scaleX(0.9215);">Add Employee</div>
<div class="t" style="left:811.60px;top:90.00px;font-size:23px;font-weight:400;color:#80bdff;transform:scaleX(0.9083);">All Employees</div>
<div class="t" style="left:803.82px;top:179.40px;font-size:45.6px;font-weight:400;color:#212529;transform:scaleX(0.9264);-webkit-text-stroke:0.5px currentColor;">Employees List</div>
<div class="t" style="left:184.71px;top:274.80px;font-size:23px;font-weight:400;color:#212529;transform:scaleX(0.8947);">Show</div>
<div class="t" style="left:255.44px;top:281.00px;font-size:18.3px;font-weight:400;color:#495057;transform:scaleX(0.9632);">10</div>
<div class="t" style="left:330.98px;top:274.80px;font-size:23px;font-weight:400;color:#212529;transform:scaleX(0.9191);">entries</div>
<div class="t" style="left:1387.92px;top:277.60px;font-size:23px;font-weight:400;color:#212529;transform:scaleX(0.8829);">Search:</div>
<div class="t" style="left:202.68px;top:354.00px;font-size:23.2px;font-weight:700;color:#212529;transform:scaleX(0.9200);">ID</div>
<div class="t" style="left:384.86px;top:353.80px;font-size:23.2px;font-weight:700;color:#212529;transform:scaleX(0.9387);">Name</div>
<div class="t" style="left:651.50px;top:353.80px;font-size:23.2px;font-weight:700;color:#212529;transform:scaleX(0.8750);">Address</div>
<div class="t" style="left:963.11px;top:353.80px;font-size:23.2px;font-weight:700;color:#212529;transform:scaleX(0.8942);">Salary</div>
<div class="t" style="left:1236.00px;top:353.80px;font-size:23.2px;font-weight:700;color:#212529;transform:scaleX(0.9099);">Action</div>
<div class="t" style="left:184.86px;top:939.70px;font-size:23px;font-weight:400;color:#212529;transform:scaleX(0.9380);">Showing 1 to 6 of 6 entries</div>
<div class="t" style="left:1487.69px;top:933.00px;font-size:23px;font-weight:400;color:#6c757d;transform:scaleX(0.9057);">Previous</div>
<div class="t" style="left:1602.92px;top:933.00px;font-size:23px;font-weight:400;color:#ffffff;transform:scaleX(0.8800);">1</div>
<div class="t" style="left:1647.31px;top:933.00px;font-size:23px;font-weight:400;color:#6c757d;transform:scaleX(0.9435);">Next</div>
<div class="t" style="left:203.91px;top:422.80px;font-size:22.5px;font-weight:400;color:#212529;transform:scaleX(0.8861);">109</div>
<div class="t" style="left:384.32px;top:422.80px;font-size:22.5px;font-weight:400;color:#212529;transform:scaleX(0.8825);">Satya</div>
<div class="t" style="left:649.55px;top:422.80px;font-size:22.5px;font-weight:400;color:#212529;transform:scaleX(0.9746);">Killaru</div>
<div class="t" style="left:964.01px;top:422.80px;font-size:22.5px;font-weight:400;color:#212529;transform:scaleX(0.9860);">1111</div>
<div class="t" style="left:203.86px;top:507.45px;font-size:22.5px;font-weight:400;color:#212529;transform:scaleX(0.9412);">110</div>
<div class="t" style="left:385.20px;top:507.45px;font-size:22.5px;font-weight:400;color:#212529;transform:scaleX(0.9167);">Vijay</div>
<div class="t" style="left:650.16px;top:507.45px;font-size:22.5px;font-weight:400;color:#212529;transform:scaleX(0.9196);">Kakinada</div>
<div class="t" style="left:963.17px;top:507.45px;font-size:22.5px;font-weight:400;color:#212529;transform:scaleX(0.9344);">20000</div>
<div class="t" style="left:203.88px;top:592.10px;font-size:22.5px;font-weight:400;color:#212529;transform:scaleX(0.9242);">111</div>
<div class="t" style="left:384.32px;top:592.10px;font-size:22.5px;font-weight:400;color:#212529;transform:scaleX(0.8825);">Satya</div>
<div class="t" style="left:649.55px;top:592.10px;font-size:22.5px;font-weight:400;color:#212529;transform:scaleX(0.9746);">Killaru</div>
<div class="t" style="left:964.18px;top:592.10px;font-size:22.5px;font-weight:400;color:#212529;transform:scaleX(0.9162);">122000</div>
<div class="t" style="left:203.87px;top:676.75px;font-size:22.5px;font-weight:400;color:#212529;transform:scaleX(0.9324);">112</div>
<div class="t" style="left:385.20px;top:676.75px;font-size:22.5px;font-weight:400;color:#212529;transform:scaleX(0.9068);">Johnny</div>
<div class="t" style="left:651.40px;top:676.75px;font-size:22.5px;font-weight:400;color:#212529;transform:scaleX(0.9327);">Vizag</div>
<div class="t" style="left:963.48px;top:676.75px;font-size:22.5px;font-weight:400;color:#212529;transform:scaleX(0.9246);">30000</div>
<div class="t" style="left:203.87px;top:761.40px;font-size:22.5px;font-weight:400;color:#212529;transform:scaleX(0.9324);">113</div>
<div class="t" style="left:383.29px;top:761.40px;font-size:22.5px;font-weight:400;color:#212529;transform:scaleX(0.9571);">Kiran</div>
<div class="t" style="left:650.06px;top:761.40px;font-size:22.5px;font-weight:400;color:#212529;transform:scaleX(0.9694);">NewZland</div>
<div class="t" style="left:964.39px;top:761.40px;font-size:22.5px;font-weight:400;color:#212529;transform:scaleX(0.9108);">100000</div>
<div class="t" style="left:203.88px;top:846.05px;font-size:22.5px;font-weight:400;color:#212529;transform:scaleX(0.9200);">114</div>
<div class="t" style="left:383.28px;top:846.05px;font-size:22.5px;font-weight:400;color:#212529;transform:scaleX(0.9593);">Ronaldo</div>
<div class="t" style="left:649.54px;top:846.05px;font-size:22.5px;font-weight:400;color:#212529;transform:scaleX(0.9802);">Mirzapur</div>
<div class="t" style="left:962.97px;top:846.05px;font-size:22.5px;font-weight:400;color:#212529;transform:scaleX(0.9262);">50000</div>
</body></html>
